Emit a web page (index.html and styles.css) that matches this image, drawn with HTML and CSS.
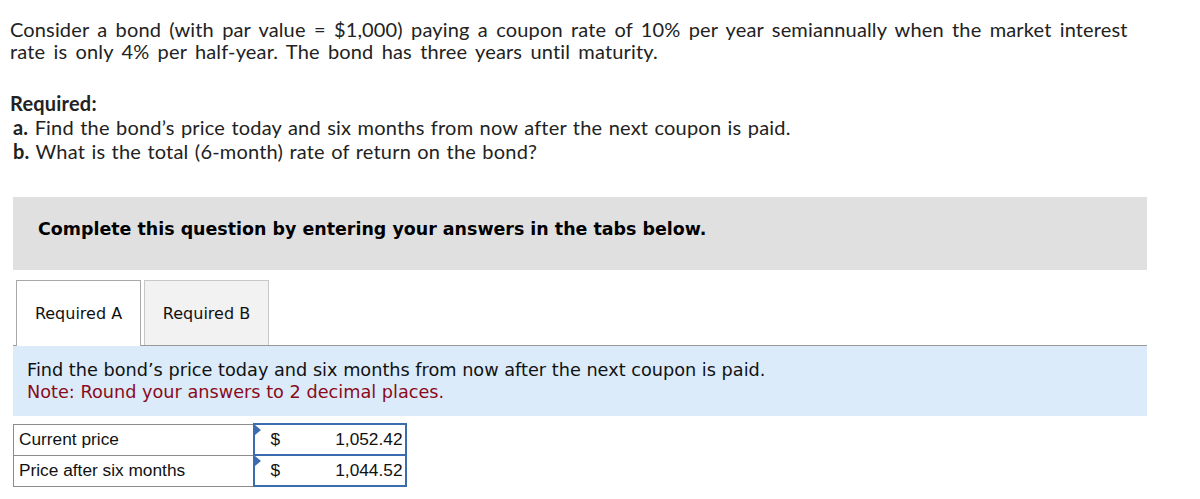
FILE: index.html
```html
<!DOCTYPE html>
<html>
<head>
<meta charset="utf-8">
<link rel="stylesheet" href="styles.css">
</head>
<body>
<div class="page">
  <div class="intro">
    <p>Consider a bond (with par value = $1,000) paying a coupon rate of 10% per year semiannually when the market interest rate is only 4% per half-year. The bond has three years until maturity.</p>
  </div>
  <div class="required">
    <div class="req-title">Required:</div>
    <div class="req-item"><b>a.</b> Find the bond’s price today and six months from now after the next coupon is paid.</div>
    <div class="req-item"><b>b.</b> What is the total (6-month) rate of return on the bond?</div>
  </div>
  <div class="banner">Complete this question by entering your answers in the tabs below.</div>
  <div class="tabs">
    <div class="tab active">Required A</div>
    <div class="tab">Required B</div>
  </div>
  <div class="panel">
    <div class="panel-text">Find the bond’s price today and six months from now after the next coupon is paid.</div>
    <div class="panel-note">Note: Round your answers to 2 decimal places.</div>
  </div>
  <table class="answers">
    <tr>
      <td class="label">Current price</td>
      <td class="input"><span class="flag"></span><span class="cur">$</span><span class="val">1,052.42</span></td>
    </tr>
    <tr>
      <td class="label">Price after six months</td>
      <td class="input"><span class="flag"></span><span class="cur">$</span><span class="val">1,044.52</span></td>
    </tr>
  </table>
</div>
</body>
</html>
```
FILE: styles.css
```css
html, body {
  margin: 0;
  padding: 0;
  background: #ffffff;
}
.page {
  padding: 18px 0 0 0;
  width: 1200px;
}
.intro {
  padding: 0 10px;
  font-family: Lato, "Open Sans", sans-serif;
  font-size: 20px;
  letter-spacing: 0.15px;
  word-spacing: 3px;
  line-height: 22px;
  color: #222;
}
.intro p {
  margin: 0;
  max-width: 1140px;
}
.required {
  margin-top: 29px;
  padding: 0 10px;
  font-family: Lato, "Open Sans", sans-serif;
  font-size: 20px;
  letter-spacing: 0.2px;
  word-spacing: 1px;
  line-height: 24px;
  color: #222;
}
.req-title {
  font-weight: bold;
}
.req-item {
  padding-left: 3px;
}
.banner {
  margin: 34px 0 0 13px;
  width: 1134px;
  height: 73px;
  box-sizing: border-box;
  background: #e0e0e0;
  padding: 0 0 10px 25px;
  display: flex;
  align-items: center;
  font-family: "DejaVu Sans", Verdana, sans-serif;
  font-weight: bold;
  font-size: 17.45px;
  color: #000;
}
.tabs {
  display: flex;
  margin: 10px 0 0 16px;
  gap: 3px;
  position: relative;
  z-index: 1;
}
.tab {
  width: 125px;
  height: 65px;
  box-sizing: border-box;
  border: 1px solid #c8c8c8;
  border-bottom: none;
  background: #f2f2f2;
  display: flex;
  align-items: center;
  justify-content: center;
  font-family: "DejaVu Sans", Verdana, sans-serif;
  font-size: 16px;
  color: #111;
}
.tab.active {
  background: #ffffff;
  border-color: #a8a8a8;
  height: 66px;
}
.panel {
  margin: -1px 0 0 13px;
  width: 1134px;
  height: 71px;
  box-sizing: border-box;
  border-top: 1px solid #999;
  background: #dbebfa;
  padding: 13px 0 0 14px;
  font-family: "DejaVu Sans", Verdana, sans-serif;
  font-size: 17.7px;
  line-height: 22px;
  color: #111;
}
.panel-note {
  color: #8b0a1a;
}
.answers {
  margin: 7px 0 0 13px;
  border-collapse: collapse;
  font-family: "Liberation Sans", Arial, sans-serif;
  font-size: 17.3px;
  color: #111;
}
.answers td {
  height: 31px;
  box-sizing: border-box;
  padding: 0;
  border: 1px solid #8c8c8c;
}
.answers .label {
  width: 240px;
  padding-left: 5px;
}
.answers .input {
  width: 152px;
  border: 2px solid #3c6cb0;
  position: relative;
  white-space: nowrap;
}
.input .flag {
  position: absolute;
  left: 0;
  top: 0;
  width: 0;
  height: 0;
  border-top: 5px solid transparent;
  border-bottom: 5px solid transparent;
  border-left: 6px solid #3c6cb0;
}
.input .cur {
  display: inline-block;
  padding-left: 16px;
}
.input .val {
  float: right;
  padding-right: 2px;
}
```
